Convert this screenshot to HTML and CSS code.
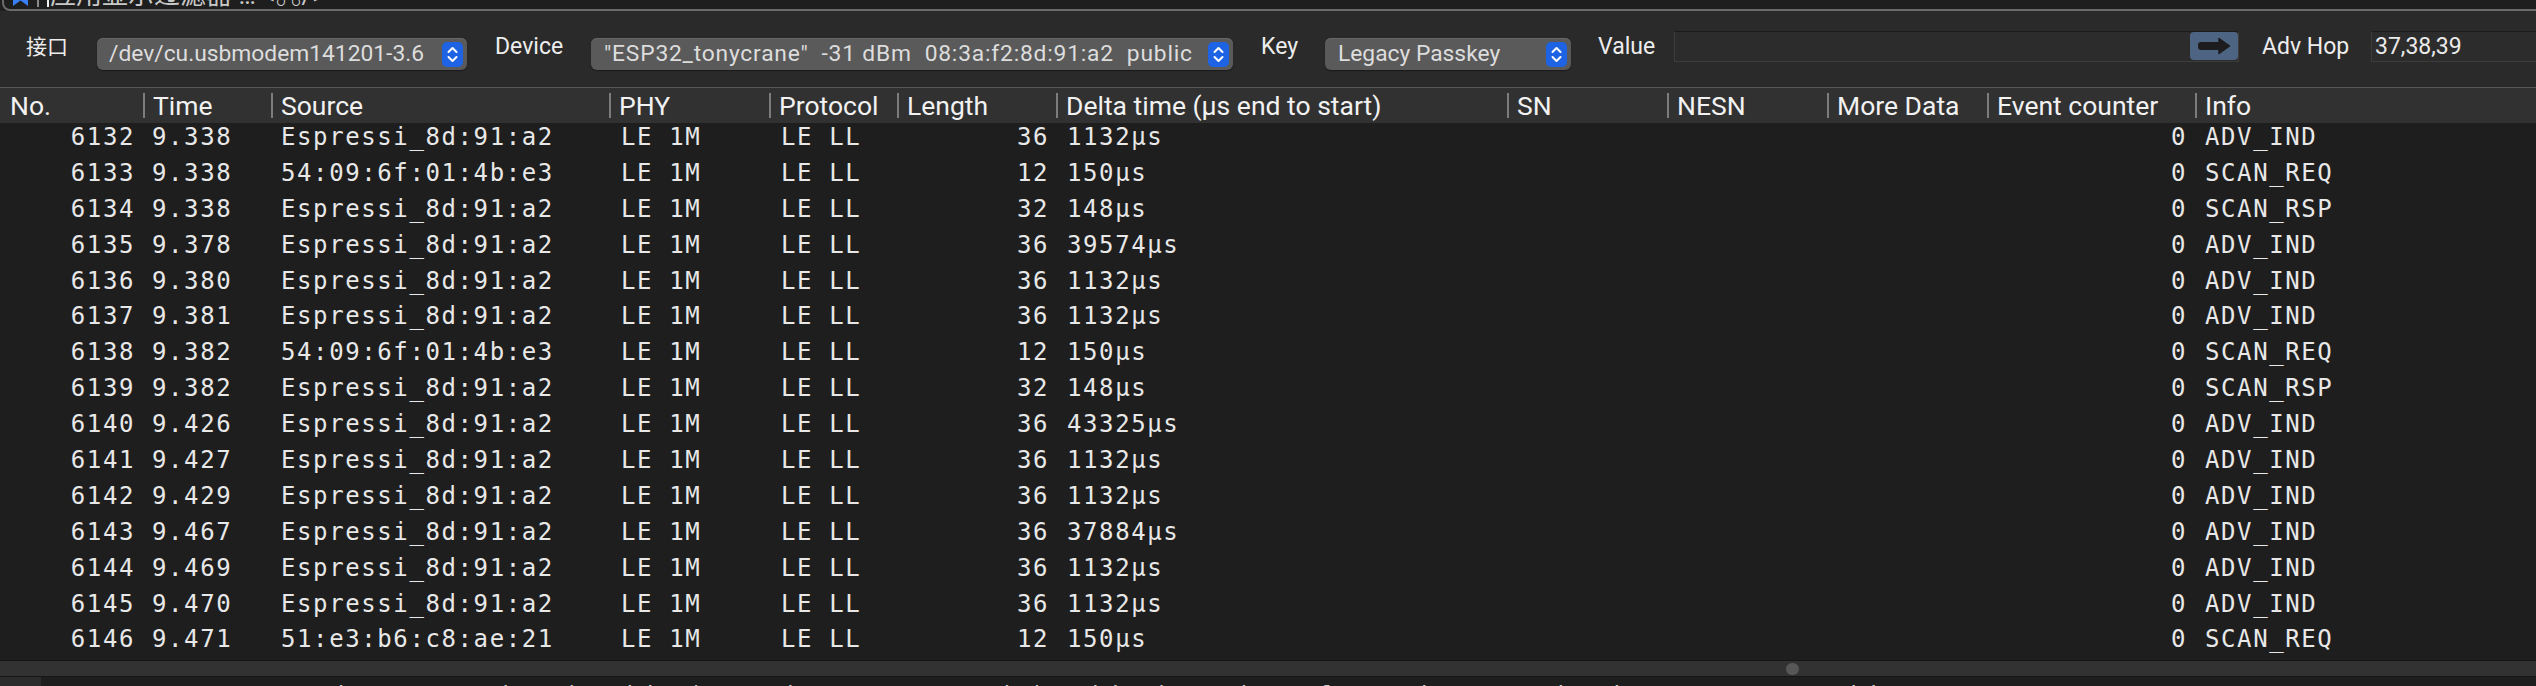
FILE: index.html
```html
<!DOCTYPE html>
<html lang="zh">
<head>
<meta charset="utf-8">
<title>Wireshark</title>
<link rel="stylesheet" href="styles.css">
</head>
<body>
<div class="app">
  <div class="filterbar">
    <div class="filterfield">
      <svg class="bookmark" width="17" height="22" viewBox="0 0 17 22"><path d="M1 0 H16 V21 L8.5 15.5 L1 21 Z" fill="#3a7ef4"/></svg>
      <span class="fsep"></span>
      <span class="caret"></span>
      <span class="ftext">应用显示过滤器 … &lt;⌘/&gt;</span>
    </div>
  </div>

  <div class="toolbar">
    <span class="lbl lbl-if">接口</span>
    <div class="popup pop1">
      <span class="ptext">/dev/cu.usbmodem141201-3.6</span>
      <svg class="stepper" width="21" height="25" viewBox="0 0 21 25"><rect x="0" y="0" width="21" height="25" rx="5" fill="#1d63e3"/><path d="M6.5 10 L10.5 6 L14.5 10 M6.5 15 L10.5 19 L14.5 15" fill="none" stroke="#fff" stroke-width="2" stroke-linecap="round" stroke-linejoin="round"/></svg>
    </div>
    <span class="lbl lbl-dev">Device</span>
    <div class="popup pop2">
      <span class="ptext">"ESP32_tonycrane"&nbsp; -31 dBm&nbsp; 08:3a:f2:8d:91:a2&nbsp; public</span>
      <svg class="stepper" width="21" height="25" viewBox="0 0 21 25"><rect x="0" y="0" width="21" height="25" rx="5" fill="#1d63e3"/><path d="M6.5 10 L10.5 6 L14.5 10 M6.5 15 L10.5 19 L14.5 15" fill="none" stroke="#fff" stroke-width="2" stroke-linecap="round" stroke-linejoin="round"/></svg>
    </div>
    <span class="lbl lbl-key">Key</span>
    <div class="popup pop3">
      <span class="ptext">Legacy Passkey</span>
      <svg class="stepper" width="21" height="25" viewBox="0 0 21 25"><rect x="0" y="0" width="21" height="25" rx="5" fill="#1d63e3"/><path d="M6.5 10 L10.5 6 L14.5 10 M6.5 15 L10.5 19 L14.5 15" fill="none" stroke="#fff" stroke-width="2" stroke-linecap="round" stroke-linejoin="round"/></svg>
    </div>
    <span class="lbl lbl-val">Value</span>
    <div class="field field-val">
      <span class="gobtn">
        <svg width="48" height="28" viewBox="0 0 48 28"><rect x="8" y="10" width="23" height="8" rx="3" fill="#1d1d1f"/><path d="M29 6.5 L39.5 14 L29 21.5 Z" fill="#1d1d1f" stroke="#1d1d1f" stroke-width="1.5" stroke-linejoin="round"/></svg>
      </span>
    </div>
    <span class="lbl lbl-hop">Adv Hop</span>
    <div class="field field-hop"><span class="ftxt">37,38,39</span></div>
  </div>

  <div class="header">
    <div class="hc hc-first">No.</div>
    <div class="hc"><span class="sep"></span>Time</div>
    <div class="hc"><span class="sep"></span>Source</div>
    <div class="hc"><span class="sep"></span>PHY</div>
    <div class="hc"><span class="sep"></span>Protocol</div>
    <div class="hc"><span class="sep"></span>Length</div>
    <div class="hc"><span class="sep"></span>Delta time (µs end to start)</div>
    <div class="hc"><span class="sep"></span>SN</div>
    <div class="hc"><span class="sep"></span>NESN</div>
    <div class="hc"><span class="sep"></span>More Data</div>
    <div class="hc"><span class="sep"></span>Event counter</div>
    <div class="hc"><span class="sep"></span>Info</div>
  </div>

  <div class="list">
    <div class="rows">
      <div class="row"><span class="c-no">6132</span><span class="c-time">9.338</span><span class="c-src">Espressi_8d:91:a2</span><span class="c-phy">LE 1M</span><span class="c-proto">LE LL</span><span class="c-len">36</span><span class="c-delta">1132µs</span><span></span><span></span><span></span><span class="c-ev">0</span><span class="c-info">ADV_IND</span></div>
      <div class="row"><span class="c-no">6133</span><span class="c-time">9.338</span><span class="c-src">54:09:6f:01:4b:e3</span><span class="c-phy">LE 1M</span><span class="c-proto">LE LL</span><span class="c-len">12</span><span class="c-delta">150µs</span><span></span><span></span><span></span><span class="c-ev">0</span><span class="c-info">SCAN_REQ</span></div>
      <div class="row"><span class="c-no">6134</span><span class="c-time">9.338</span><span class="c-src">Espressi_8d:91:a2</span><span class="c-phy">LE 1M</span><span class="c-proto">LE LL</span><span class="c-len">32</span><span class="c-delta">148µs</span><span></span><span></span><span></span><span class="c-ev">0</span><span class="c-info">SCAN_RSP</span></div>
      <div class="row"><span class="c-no">6135</span><span class="c-time">9.378</span><span class="c-src">Espressi_8d:91:a2</span><span class="c-phy">LE 1M</span><span class="c-proto">LE LL</span><span class="c-len">36</span><span class="c-delta">39574µs</span><span></span><span></span><span></span><span class="c-ev">0</span><span class="c-info">ADV_IND</span></div>
      <div class="row"><span class="c-no">6136</span><span class="c-time">9.380</span><span class="c-src">Espressi_8d:91:a2</span><span class="c-phy">LE 1M</span><span class="c-proto">LE LL</span><span class="c-len">36</span><span class="c-delta">1132µs</span><span></span><span></span><span></span><span class="c-ev">0</span><span class="c-info">ADV_IND</span></div>
      <div class="row"><span class="c-no">6137</span><span class="c-time">9.381</span><span class="c-src">Espressi_8d:91:a2</span><span class="c-phy">LE 1M</span><span class="c-proto">LE LL</span><span class="c-len">36</span><span class="c-delta">1132µs</span><span></span><span></span><span></span><span class="c-ev">0</span><span class="c-info">ADV_IND</span></div>
      <div class="row"><span class="c-no">6138</span><span class="c-time">9.382</span><span class="c-src">54:09:6f:01:4b:e3</span><span class="c-phy">LE 1M</span><span class="c-proto">LE LL</span><span class="c-len">12</span><span class="c-delta">150µs</span><span></span><span></span><span></span><span class="c-ev">0</span><span class="c-info">SCAN_REQ</span></div>
      <div class="row"><span class="c-no">6139</span><span class="c-time">9.382</span><span class="c-src">Espressi_8d:91:a2</span><span class="c-phy">LE 1M</span><span class="c-proto">LE LL</span><span class="c-len">32</span><span class="c-delta">148µs</span><span></span><span></span><span></span><span class="c-ev">0</span><span class="c-info">SCAN_RSP</span></div>
      <div class="row"><span class="c-no">6140</span><span class="c-time">9.426</span><span class="c-src">Espressi_8d:91:a2</span><span class="c-phy">LE 1M</span><span class="c-proto">LE LL</span><span class="c-len">36</span><span class="c-delta">43325µs</span><span></span><span></span><span></span><span class="c-ev">0</span><span class="c-info">ADV_IND</span></div>
      <div class="row"><span class="c-no">6141</span><span class="c-time">9.427</span><span class="c-src">Espressi_8d:91:a2</span><span class="c-phy">LE 1M</span><span class="c-proto">LE LL</span><span class="c-len">36</span><span class="c-delta">1132µs</span><span></span><span></span><span></span><span class="c-ev">0</span><span class="c-info">ADV_IND</span></div>
      <div class="row"><span class="c-no">6142</span><span class="c-time">9.429</span><span class="c-src">Espressi_8d:91:a2</span><span class="c-phy">LE 1M</span><span class="c-proto">LE LL</span><span class="c-len">36</span><span class="c-delta">1132µs</span><span></span><span></span><span></span><span class="c-ev">0</span><span class="c-info">ADV_IND</span></div>
      <div class="row"><span class="c-no">6143</span><span class="c-time">9.467</span><span class="c-src">Espressi_8d:91:a2</span><span class="c-phy">LE 1M</span><span class="c-proto">LE LL</span><span class="c-len">36</span><span class="c-delta">37884µs</span><span></span><span></span><span></span><span class="c-ev">0</span><span class="c-info">ADV_IND</span></div>
      <div class="row"><span class="c-no">6144</span><span class="c-time">9.469</span><span class="c-src">Espressi_8d:91:a2</span><span class="c-phy">LE 1M</span><span class="c-proto">LE LL</span><span class="c-len">36</span><span class="c-delta">1132µs</span><span></span><span></span><span></span><span class="c-ev">0</span><span class="c-info">ADV_IND</span></div>
      <div class="row"><span class="c-no">6145</span><span class="c-time">9.470</span><span class="c-src">Espressi_8d:91:a2</span><span class="c-phy">LE 1M</span><span class="c-proto">LE LL</span><span class="c-len">36</span><span class="c-delta">1132µs</span><span></span><span></span><span></span><span class="c-ev">0</span><span class="c-info">ADV_IND</span></div>
      <div class="row"><span class="c-no">6146</span><span class="c-time">9.471</span><span class="c-src">51:e3:b6:c8:ae:21</span><span class="c-phy">LE 1M</span><span class="c-proto">LE LL</span><span class="c-len">12</span><span class="c-delta">150µs</span><span></span><span></span><span></span><span class="c-ev">0</span><span class="c-info">SCAN_REQ</span></div>
    </div>
  </div>

  <div class="hscroll"><span class="knob"></span></div>

  <div class="details">
    <span class="dbox"></span>
    <span class="dtext">Frame 6146: 12 bytes on wire (96 bits), 12 bytes captured (96 bits) on interface /dev/cu.usbmodem141201-3.6, id 0</span>
  </div>
</div>
</body>
</html>
```

FILE: styles.css
```css
* { box-sizing: border-box; }

html, body {
  margin: 0;
  padding: 0;
  background: #1e1e1e;
}

body {
  width: 2536px;
  height: 686px;
  overflow: hidden;
  font-family: Roboto, "Noto Sans CJK SC", sans-serif;
  color: #ececec;
}

.app {
  display: flex;
  flex-direction: column;
  width: 2536px;
  height: 686px;
}

/* ---------- filter bar (mostly scrolled off the top) ---------- */
.filterbar {
  height: 11px;
  flex: none;
  overflow: hidden;
  padding-left: 2px;
  background: #1e1e1e;
}

.filterfield {
  margin-top: -21px;
  height: 32px;
  width: 2600px;
  border: 2px solid #6a6a6a;
  border-radius: 8px;
  background: #1e1e1e;
  display: flex;
  align-items: flex-start;
}

.bookmark {
  margin-left: 8px;
  margin-top: 4px;
  flex: none;
}

.fsep {
  width: 2px;
  height: 26px;
  margin-left: 8px;
  background: #8a8a8a;
  flex: none;
}

.caret {
  width: 2px;
  height: 26px;
  margin-left: 8px;
  background: #f0f0f0;
  flex: none;
}

.ftext {
  margin-left: 1px;
  margin-top: -1px;
  font-size: 26px;
  line-height: 30px;
  color: #c9c9c9;
  white-space: pre;
}

/* ---------- toolbar ---------- */
.toolbar {
  height: 76px;
  flex: none;
  background: #2a2a2a;
  display: flex;
  align-items: flex-start;
  font-size: 23px;
}

.lbl {
  margin-top: 20px;
  height: 32px;
  line-height: 32px;
  color: #ededed;
  white-space: nowrap;
  flex: none;
}

.lbl-if  { width: 97px;  padding-left: 26px; font-size: 21px; }
.lbl-dev { width: 124px; padding-left: 28px; }
.lbl-key { width: 92px;  padding-left: 28px; }
.lbl-val { width: 103px; padding-left: 27px; }
.lbl-hop { width: 132px; padding-left: 23px; }

.popup {
  margin-top: 27px;
  height: 32px;
  flex: none;
  display: flex;
  align-items: center;
  justify-content: space-between;
  padding: 0 4px 0 12px;
  background: #5a5a5a;
  border-radius: 6px;
  box-shadow: inset 0 1px 0 #666666, 0 1px 1px #1a1a1a;
  font-size: 22.8px;
}

.pop1 { width: 370px; }
.pop2 { width: 642px; padding-left: 13px; }
.pop2 .ptext { letter-spacing: 0.8px; }
.pop3 { width: 246px; padding-left: 13px; }

.ptext {
  color: #dddddd;
  white-space: pre;
  line-height: 32px;
}

.stepper {
  flex: none;
  margin-top: 1px;
}

.field {
  margin-top: 20px;
  height: 31px;
  flex: none;
  display: flex;
  align-items: center;
  background: #2c2c2c;
  border: 1px solid #3c3c3c;
  border-top-color: #1b1b1b;
}

.field-val {
  width: 565px;
  justify-content: flex-end;
  align-items: flex-start;
}

.gobtn {
  width: 48px;
  height: 28px;
  background: #4d6482;
  border-radius: 4px;
  display: flex;
}

.field-hop {
  flex: 1;
  border-right: none;
  padding-left: 3px;
}

.ftxt {
  color: #eaeaea;
  line-height: 29px;
}

/* ---------- column header ---------- */
.header {
  height: 36px;
  flex: none;
  border-top: 1px solid #575757;
  background: #313131;
  display: grid;
  grid-template-columns: 143px 128px 338px 160px 128px 159px 451px 160px 160px 160px 208px 1fr;
  font-size: 26.5px;
  color: #f2f2f2;
}

.hc {
  display: flex;
  align-items: center;
  white-space: nowrap;
  overflow: hidden;
}

.hc-first { padding-left: 10px; }

.sep {
  width: 2px;
  height: 25px;
  margin-right: 8px;
  background: #7c7c7c;
  flex: none;
}

/* ---------- packet list ---------- */
.list {
  height: 537px;
  flex: none;
  overflow: hidden;
  background: #1e1e1e;
}

.rows {
  margin-top: -4px;
}

.row {
  display: grid;
  grid-template-columns: 143px 128px 338px 160px 128px 159px 451px 160px 160px 160px 208px 1fr;
  height: 35.9px;
  align-items: center;
  font-family: "DejaVu Sans Mono", "Liberation Mono", monospace;
  font-size: 24px;
  letter-spacing: 1.6px;
  color: #e8e8e8;
  white-space: pre;
}

.c-no    { text-align: right; padding-right: 8px; }
.c-time  { padding-left: 9px; }
.c-src   { padding-left: 10px; }
.c-phy   { padding-left: 12px; }
.c-proto { padding-left: 12px; }
.c-len   { text-align: right; padding-right: 7px; }
.c-delta { padding-left: 11px; }
.c-ev    { text-align: right; padding-right: 8px; }
.c-info  { padding-left: 10px; }

/* ---------- horizontal scrollbar ---------- */
.hscroll {
  height: 17px;
  flex: none;
  background: #323232;
  border-top: 1px solid #151515;
  border-bottom: 1px solid #151515;
  display: flex;
  align-items: flex-start;
}

.knob {
  margin-left: 1786px;
  margin-top: 2px;
  width: 13px;
  height: 12px;
  border-radius: 6px;
  background: #575757;
}

/* ---------- packet details (cut off) ---------- */
.details {
  flex: 1;
  overflow: hidden;
  display: flex;
  align-items: flex-start;
  background: #1e1e1e;
}

.dbox {
  width: 41px;
  height: 30px;
  background: #2b2b2b;
  flex: none;
}

.dtext {
  margin-left: 56px;
  margin-top: 4px;
  font-family: "DejaVu Sans Mono", "Liberation Mono", monospace;
  font-size: 24px;
  letter-spacing: 1.6px;
  line-height: 30px;
  color: #cfcfcf;
  white-space: pre;
}
```
